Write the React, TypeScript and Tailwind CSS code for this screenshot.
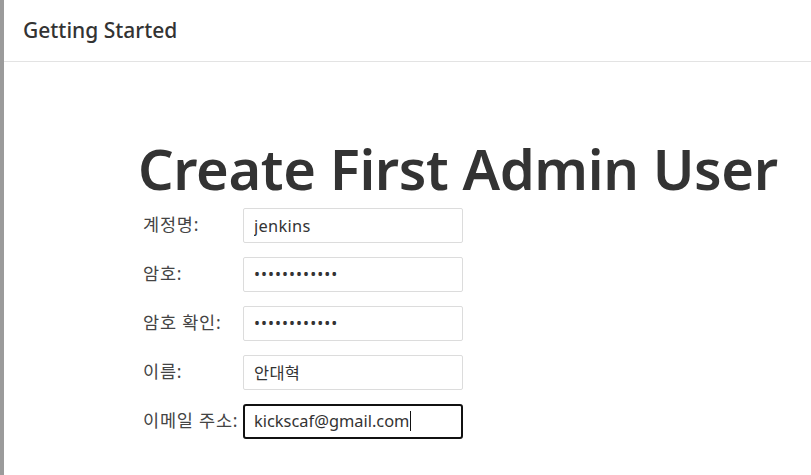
import React from 'react';

const fields = [
  { label: '계정명:', value: 'jenkins', type: 'text' },
  { label: '암호:', value: 'jenkins12345', type: 'password' },
  { label: '암호 확인:', value: 'jenkins12345', type: 'password' },
  { label: '이름:', value: '안대혁', type: 'text' },
];

const App = () => {
  return (
    <div
      className="flex h-[475px] w-full overflow-hidden bg-white text-[#333]"
      style={{ fontFamily: '"Noto Sans", "Noto Sans CJK KR", sans-serif' }}
    >
      <div className="w-[4px] shrink-0 bg-[#9b9b9b]"></div>
      <div className="flex flex-1 flex-col">
        <header className="flex h-[62px] items-center border-b border-[#e3e3e3] pl-[19px]">
          <h2 className="text-[21px] font-medium text-[#333]">Getting Started</h2>
        </header>
        <main className="pl-[134px] pt-[76px]">
          <h1 className="text-[56px] font-semibold leading-[1.1] tracking-[-0.4px] text-[#333]">Create First Admin User</h1>
          <form className="ml-[5px] mt-[8px] flex flex-col gap-[14px]">
            {fields.map((f) => (
              <div key={f.label} className="flex items-start">
                <label className="w-[100px] pt-[3px] text-[17.5px] tracking-[0.8px] text-[#444]">{f.label}</label>
                <input
                  type={f.type}
                  defaultValue={f.value}
                  readOnly
                  className={
                    f.type === 'password'
                      ? 'h-[35px] w-[220px] rounded-[2px] border border-[#dcdcdc] bg-white px-[10px] text-[16px] tracking-[1px] text-[#333] outline-none'
                      : 'h-[35px] w-[220px] rounded-[2px] border border-[#dcdcdc] bg-white px-[10px] text-[16.4px] tracking-[0.3px] text-[#333] outline-none'
                  }
                />
              </div>
            ))}
            <div className="flex items-start">
              <label className="w-[100px] pt-[3px] text-[17.5px] tracking-[0.8px] text-[#444]">이메일 주소:</label>
              <div className="flex h-[35px] w-[220px] items-center rounded-[3px] border-2 border-[#111] bg-white px-[9px] text-[16.4px] text-[#333]">
                kickscaf@gmail.com
                <span className="ml-px h-[20px] w-px bg-[#111]"></span>
              </div>
            </div>
          </form>
        </main>
      </div>
    </div>
  );
};

export default App;
